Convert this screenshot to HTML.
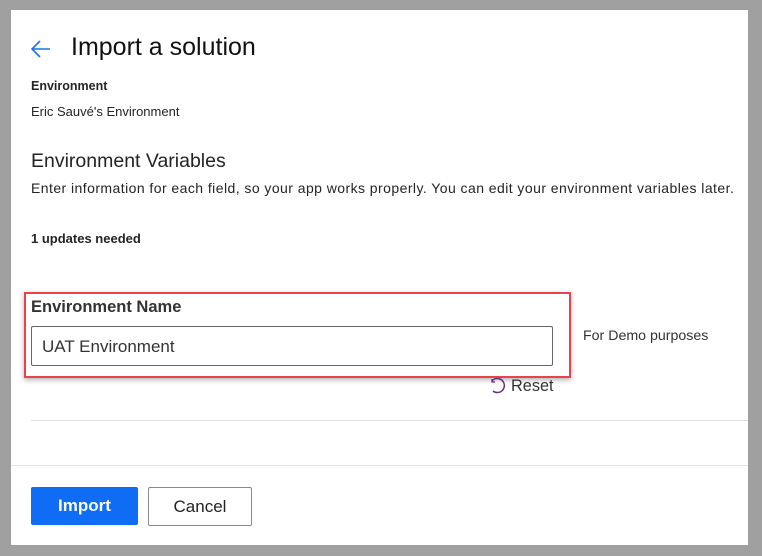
<!DOCTYPE html>
<html><head><style>
body{margin:0;width:762px;height:556px;background:#a0a0a0;font-family:"Liberation Sans",sans-serif;overflow:hidden;position:relative}
.p{position:absolute;left:11px;top:10px;width:737px;height:535px;background:#fff}
.a{position:absolute;color:#242424;white-space:nowrap}
</style></head><body>
<div class="p"></div>
<svg style="position:absolute;left:30px;top:38px" width="22" height="22" viewBox="0 0 22 22"><path d="M20 11H2M10 3L2 11l8 8" fill="none" stroke="#1a73e8" stroke-width="1.6"/></svg>
<div class="a" style="left:71px;top:33px;font-size:25px;color:#111">Import a solution</div>
<div class="a" style="left:31px;top:79px;font-size:12.5px;font-weight:bold">Environment</div>
<div class="a" style="left:31px;top:104px;font-size:13px">Eric Sauvé's Environment</div>
<div class="a" style="left:31px;top:150px;font-size:19.5px">Environment Variables</div>
<div class="a" style="left:31px;top:180px;font-size:14px;letter-spacing:0.44px">Enter information for each field, so your app works properly. You can edit your environment variables later.</div>
<div class="a" style="left:31px;top:231px;font-size:13px;font-weight:bold">1 updates needed</div>
<div style="position:absolute;left:24px;top:292px;width:543px;height:82px;border:2px solid #e8424a;box-shadow:0 2px 5px rgba(0,0,0,.3)"></div>
<div class="a" style="left:31px;top:298px;font-size:16.5px;font-weight:bold;color:#333">Environment Name</div>
<div style="position:absolute;left:31px;top:326px;width:520px;height:38px;border:1px solid #666;border-radius:2px"></div>
<div class="a" style="left:42px;top:337px;font-size:17px;color:#333">UAT Environment</div>
<div class="a" style="left:583px;top:328px;font-size:14.2px;color:#333">For Demo purposes</div>
<svg style="position:absolute;left:489px;top:378px" width="18" height="18" viewBox="0 0 18 18"><path d="M3 3a7 7 0 1 1 1 10" fill="none" stroke="#6b2d7a" stroke-width="1.5"/><path d="M3 1v3h3" fill="none" stroke="#6b2d7a" stroke-width="1.3"/></svg>
<div class="a" style="left:511px;top:377px;font-size:16.3px;color:#333">Reset</div>
<div style="position:absolute;left:31px;top:420px;width:717px;height:1px;background:#e0e0e0"></div>
<div style="position:absolute;left:11px;top:465px;width:737px;height:1px;background:#e6e6e6"></div>
<div style="position:absolute;left:31px;top:487px;width:107px;height:38px;background:#0f6cf5;border-radius:2px;color:#fff;font-size:17px;font-weight:bold;text-align:center;line-height:38px">Import</div>
<div style="position:absolute;left:148px;top:487px;width:102px;height:37px;border:1px solid #888;border-radius:2px;color:#222;font-size:17px;text-align:center;line-height:37px">Cancel</div>
</body></html>
